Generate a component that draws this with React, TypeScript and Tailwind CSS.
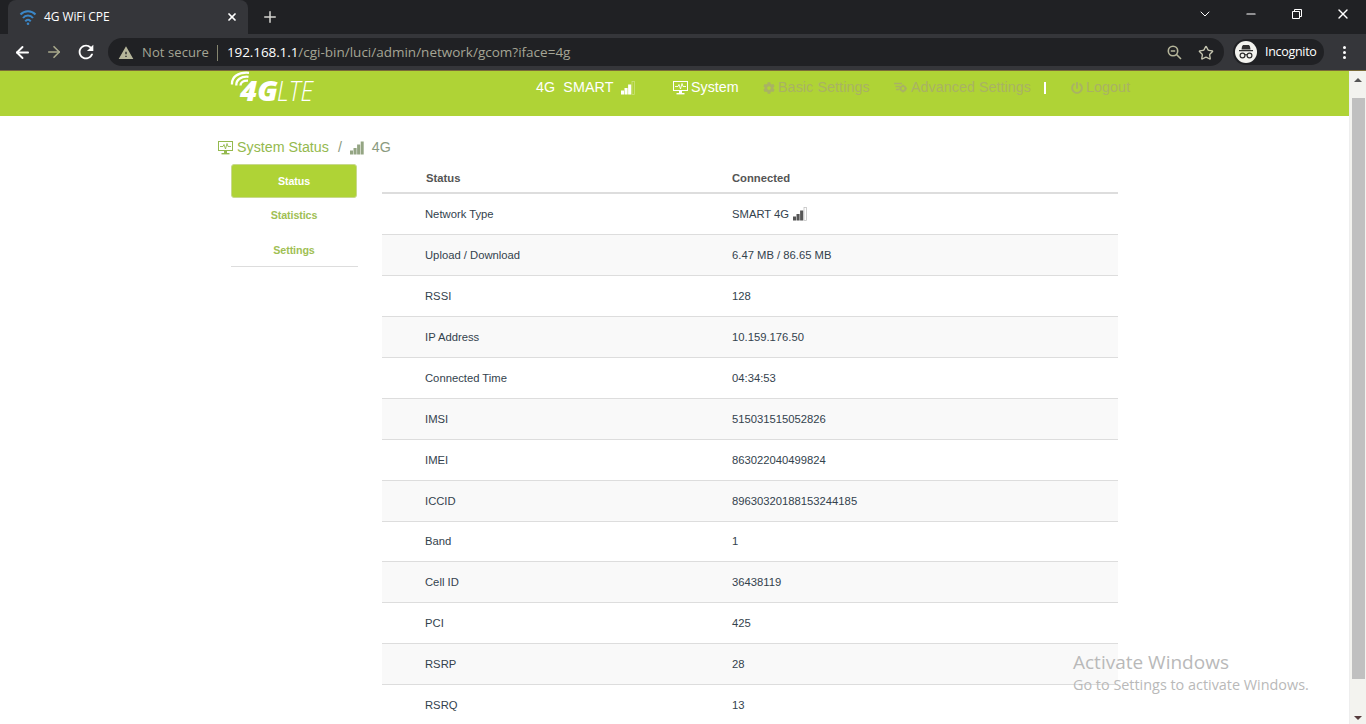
import { ReactNode } from "react";
import { ArrowLeft, ArrowRight, ChevronDown, Minus, Plus, Star, X } from "lucide-react";
import { FaCog, FaPowerOff } from "react-icons/fa";
import { MdRefresh, MdWarning } from "react-icons/md";

const rows = [
  { label: "Network Type", value: "SMART 4G", signal: true },
  { label: "Upload / Download", value: "6.47 MB / 86.65 MB" },
  { label: "RSSI", value: "128" },
  { label: "IP Address", value: "10.159.176.50" },
  { label: "Connected Time", value: "04:34:53" },
  { label: "IMSI", value: "515031515052826" },
  { label: "IMEI", value: "863022040499824" },
  { label: "ICCID", value: "89630320188153244185" },
  { label: "Band", value: "1", short: true },
  { label: "Cell ID", value: "36438119" },
  { label: "PCI", value: "425" },
  { label: "RSRP", value: "28" },
  { label: "RSRQ", value: "13" },
];

function SignalBars({ className = "", weak = false }) {
  return (
    <svg viewBox="0 0 14 14" className={`h-3.5 w-3.5 shrink-0 ${className}`} fill="currentColor">
      <rect x="0" y="9.5" width="3" height="4" />
      <rect x="3.5" y="7" width="3.1" height="6.5" />
      <rect x="7.1" y="3.5" width="3.1" height="10" />
      {weak ? (
        <rect x="11" y="0.5" width="2.5" height="13" fill="none" stroke="currentColor" strokeWidth="0.7" opacity="0.4" />
      ) : (
        <rect x="10.7" y="0.5" width="3" height="13" />
      )}
    </svg>
  );
}

function MonitorIcon() {
  return (
    <svg viewBox="0 0 15 14" className="h-3.5 w-[15px] shrink-0" fill="none" stroke="currentColor">
      <rect x="0.5" y="0.5" width="14" height="9" />
      <path d="M2 5.5h3l1-2 1.5 4.5L9 2.5l1 3h3" strokeWidth="0.9" />
      <path d="M7.5 10v2" strokeWidth="3" />
      <path d="M3.5 12.7h8" strokeWidth="1.4" />
    </svg>
  );
}

function AdvancedIcon() {
  return (
    <svg viewBox="0 0 14 12" className="h-3 w-3.5 shrink-0" fill="none" stroke="currentColor">
      <path d="M0 1.5h8M1.5 4.5h4.5M2 7.5h3" strokeWidth="1.3" />
      <circle cx="9" cy="6.5" r="2.4" strokeWidth="1.9" />
      <path d="M9 2.5v1.500M9 9v1.500M5.300 6.500h1M11.800 6.500h1.200" strokeWidth="1.4" />
    </svg>
  );
}

function WifiIcon() {
  return (
    <svg viewBox="0 0 18 17" className="h-[17px] w-[18px] shrink-0" fill="none" stroke="#3b87c8" strokeWidth="2">
      <path d="M1.500 5.500C5.500 1 12.500 1 16.500 5.500" />
      <path d="M4 9C6.500 5.800 11.500 5.800 14 9" />
      <path d="M6.300 12.300C7.800 10.300 10.200 10.300 11.700 12.300" />
      <circle cx="9" cy="14.800" r="1.300" fill="#3b87c8" stroke="none" />
    </svg>
  );
}

function Logo() {
  return (
    <svg viewBox="0 0 90 44" className="h-11 w-[90px] overflow-visible">
      <g fill="none" stroke="#fff" strokeWidth="2.300">
        <path d="M2 13.500C1.500 6 8 0.800 19 1.800" />
        <path d="M6.300 14.500C6 9 11 5 18.500 5.800" />
        <path d="M10.500 14.500C10.500 11.500 13 9.500 18 9.700" />
      </g>
      <text x="10" y="29.500" fill="#fff" fontFamily="Open Sans, sans-serif" fontSize="27.500" fontWeight="800" fontStyle="italic" textLength="38" lengthAdjust="spacingAndGlyphs">
        4G
      </text>
      <text x="47" y="29.500" fill="#fff" fontFamily="Open Sans, sans-serif" fontSize="27.500" fontWeight="300" fontStyle="italic" textLength="36" lengthAdjust="spacingAndGlyphs">
        LTE
      </text>
    </svg>
  );
}

function TabStrip() {
  return (
    <div className="flex h-[34px] items-end bg-[#202124] pl-2 text-white">
      <div className="flex h-[34px] w-60 items-center rounded-t-lg bg-[#35363a] pl-[11px]">
        <WifiIcon />
        <span className="ml-[7px] flex-1 text-xs tracking-[-0.1px]">4G WiFi CPE</span>
        <X className="mr-2.5 h-3 w-3" strokeWidth={3.5} />
      </div>
      <Plus className="mb-2 ml-[13px] h-[18px] w-[18px] text-[#d5d5d0]" />
      <div className="mb-3 ml-auto flex items-center">
        <ChevronDown className="mr-[31px] h-4 w-4" strokeWidth={1.5} />
        <Minus className="mr-[33px] h-3.5 w-3.5" strokeWidth={2} />
        <svg viewBox="0 0 12 12" className="mr-8 h-3 w-3" fill="none" stroke="currentColor">
          <path d="M1.500 3.500h7v7h-7zM3.500 3V1.500h7v7H9" />
        </svg>
        <X className="mr-[15px] h-4 w-4" strokeWidth={2} />
      </div>
    </div>
  );
}

function IncognitoIcon() {
  return (
    <svg viewBox="0 0 22 22" className="h-[22px] w-[22px] shrink-0">
      <circle cx="11" cy="11" r="11" fill="#f3f3ef" />
      <path d="M7 5.500l1-1.500h6l1 1.500.5 3h-9zM4 9h14v1.200H4z" fill="#303030" />
      <g fill="none" stroke="#303030" strokeWidth="1.200">
        <circle cx="7.500" cy="14.500" r="2.400" />
        <circle cx="14.500" cy="14.500" r="2.400" />
        <path d="M10 14q1-.7 2 0" />
      </g>
    </svg>
  );
}

function Toolbar() {
  return (
    <div className="flex h-9 items-center bg-[#35363a] text-white">
      <ArrowLeft className="ml-[13px] h-[19px] w-[19px]" strokeWidth={2.4} />
      <ArrowRight className="ml-[13px] h-[18px] w-[18px] text-[#a9a98c]" strokeWidth={2.2} />
      <MdRefresh className="ml-3 h-[22px] w-[22px]" />
      <div className="ml-[11px] flex h-7 w-[1116px] items-center rounded-full bg-[#202124] pt-px pl-2.5 text-[13.500px] text-[#a5a595]">
        <MdWarning className="h-4 w-4 text-[#b5b59a]" />
        <span className="ml-2 w-[68px] text-[13px] whitespace-nowrap tracking-[0.1px]">Not secure</span>
        <span className="mx-[7px] h-4 w-px bg-[#85856f]" />
        <span className="ml-0.5 flex-1 whitespace-nowrap">
          <span className="tracking-[-0.1px] text-white">192.168.1.1</span>/cgi-bin/luci/admin/network/gcom?iface=4g
        </span>
        <svg viewBox="0 0 15 15" className="mr-4 h-[15px] w-[15px]" fill="none" stroke="#b5b59a" strokeWidth="1.600">
          <circle cx="6" cy="6" r="4.700" />
          <path d="M9.500 9.500L14 14M3.800 6h4.400" />
        </svg>
        <Star className="mr-2.5 h-4 w-4 text-[#c5c5b0]" />
      </div>
      <div className="ml-[9px] flex h-[26px] w-[91px] items-center rounded-full bg-[#202124] pl-0.5 text-[12.500px]">
        <IncognitoIcon />
        <span className="ml-2 tracking-[-0.3px]">Incognito</span>
      </div>
      <div className="ml-[19px] flex flex-col gap-0.5">
        <span className="h-[3px] w-[3px] rounded-full bg-white" />
        <span className="h-[3px] w-[3px] rounded-full bg-white" />
        <span className="h-[3px] w-[3px] rounded-full bg-white" />
      </div>
    </div>
  );
}

function NavItem({ icon, children, className }: { icon: ReactNode; children: ReactNode; className: string }) {
  return (
    <a className={`flex items-center gap-[3px] whitespace-nowrap ${className}`}>
      {icon}
      {children}
    </a>
  );
}

function Header() {
  return (
    <header className="flex h-[45px] items-start bg-[#afd336] pl-[230px] text-[14.250px] text-white">
      <Logo />
      <nav className="ml-[216px] flex h-[33px] items-center">
        <span className="w-[85px] whitespace-pre tracking-[0.1px]">4G  SMART</span>
        <SignalBars weak />
        <NavItem className="ml-[38px] w-[90px]" icon={<MonitorIcon />}>System</NavItem>
        <NavItem className="w-[131px] tracking-[0.1px] text-[#a9b264]" icon={<FaCog className="h-3 w-3" />}>Basic Settings</NavItem>
        <NavItem className="w-[150px] tracking-[0.06px] text-[#a9b264]" icon={<AdvancedIcon />}>Advanced Settings</NavItem>
        <span className="h-3 w-0.5 bg-white" />
        <NavItem className="ml-[25px] tracking-[0.1px] text-[#a9b264]" icon={<FaPowerOff className="h-3 w-3" />}>Logout</NavItem>
      </nav>
    </header>
  );
}

function SideMenu() {
  return (
    <aside className="ml-[13px] w-[127px] border-b border-[#ddd] text-center text-[10.700px] font-bold tracking-[-0.1px] text-[#9fc054]">
      <div className="h-[34px] w-[126px] rounded-[3px] border border-[#c8d98d] bg-[#afd336] leading-8 text-white">Status</div>
      <div className="h-[34px] w-[126px] leading-[34px]">Statistics</div>
      <div className="h-[34px] w-[126px] leading-9">Settings</div>
    </aside>
  );
}

function StatusTable() {
  return (
    <div className="ml-6 w-[736px] text-[11.250px] text-[#33424d]">
      <div className="flex h-[30px] items-center border-b-2 border-[#ddd] pl-11 font-bold text-[#555]">
        <span className="w-[306px]">Status</span>
        <span>Connected</span>
      </div>
      {rows.map((row, i) => (
        <div
          key={row.label}
          className={`flex items-center border-b border-[#ddd] pl-[43px] ${i % 2 ? "bg-[#f9f9f9]" : "bg-white"} ${row.short ? "h-10" : "h-[41px]"}`}
        >
          <span className="w-[307px]">{row.label}</span>
          <span className="flex items-center gap-1">
            {row.value}
            {row.signal && <SignalBars weak className="text-[#555]" />}
          </span>
        </div>
      ))}
    </div>
  );
}

function Scrollbar() {
  return (
    <div className="flex w-[17px] flex-col items-center border-l border-[#eee] bg-[#f3f3ef] pt-[7px] pb-1">
      <span className="h-0 w-0 border-x-[4px] border-b-[4px] border-x-transparent border-b-[#555]" />
      <span className="mt-4 h-[581px] w-[13px] bg-[#c0c0c0]" />
      <span className="mt-auto h-0 w-0 border-x-[4px] border-t-[4px] border-x-transparent border-t-[#553c3c]" />
    </div>
  );
}

export default function App() {
  return (
    <div className="relative flex h-[724px] w-[1366px] flex-col overflow-hidden bg-white font-['Open_Sans',sans-serif]">
      <TabStrip />
      <Toolbar />
      <div className="h-px shrink-0 bg-[#7a6b38]" />
      <div className="flex min-h-0 flex-1">
        <div className="flex-1 overflow-hidden font-['Liberation_Sans',Arial,sans-serif]">
          <Header />
          <main className="pt-[21px] pl-[218px]">
            <div className="flex h-[22px] items-center text-[14.250px] text-[#94b94e]">
              <MonitorIcon />
              <span className="ml-1">System Status</span>
              <span className="ml-[9px] text-[#8a9a80]">/</span>
              <SignalBars className="ml-2 text-[#94a583]" />
              <span className="ml-2 text-[#8a9a80]">4G</span>
            </div>
            <div className="mt-[5px] flex items-start">
              <SideMenu />
              <StatusTable />
            </div>
          </main>
        </div>
        <Scrollbar />
      </div>
      <div className="absolute top-[649px] left-[1073px] whitespace-nowrap text-[#b9b9b9]">
        <div className="text-[19px] leading-[26px]">Activate Windows</div>
        <div className="text-[14.400px] leading-5">Go to Settings to activate Windows.</div>
      </div>
    </div>
  );
}
